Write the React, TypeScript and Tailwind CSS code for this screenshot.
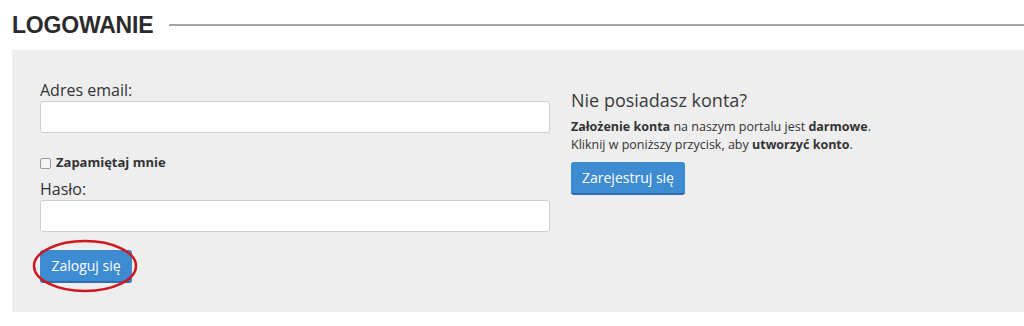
export default function App() {
  return (
    <div className="w-[1024px] h-[326px] bg-white font-['Open_Sans',sans-serif] text-[#333]">
      <div className="flex items-center pl-3 pt-[12px] h-[50px] pb-[12px]">
        <h1 className="font-['Liberation_Sans',Arial,sans-serif] font-bold text-[23px] leading-none text-[#2b2b2b] tracking-[-0.2px]">
          LOGOWANIE
        </h1>
        <div className="flex-1 ml-[16px] h-[2px] bg-[#a3a3a3]" />
      </div>
      <div className="ml-3 h-[262px] bg-[#eeeeee] flex pt-[29px]">
        <div className="w-[510px] ml-[28px]">
          <label className="block text-[16px] leading-[22px]">Adres email:</label>
          <input className="block w-[510px] h-[32px] bg-white border border-[#cfcfcf] rounded-[3px]" />
          <div className="flex items-center mt-[22px] h-[16px]">
            <span className="w-[11px] h-[11px] border border-[#9a9a9a] rounded-[2px] bg-[#f4f4f4]" />
            <span className="ml-[5px] text-[13px] font-bold text-[#333]">Zapamiętaj mnie</span>
          </div>
          <label className="block text-[16px] leading-[22px] mt-[7px]">Hasło:</label>
          <input type="password" className="block w-[510px] h-[32px] bg-white border border-[#cfcfcf] rounded-[3px]" />
          <div className="relative mt-[18px] w-[92px]">
            <button className="w-[92px] h-[33px] bg-[#3d8bd1] border-b-2 border-[#2f6fae] rounded-[3px] text-white text-[14px]">
              Zaloguj się
            </button>
            <svg className="absolute left-[-8px] top-[-11px]" width="108" height="54" viewBox="0 0 108 54">
              <ellipse cx="53" cy="27" rx="51" ry="25" fill="none" stroke="#d0161e" strokeWidth="2.5" />
            </svg>
          </div>
        </div>
        <div className="ml-[21px] pt-[9px]">
          <h2 className="text-[18px] leading-[24px] text-[#3a3a3a]">Nie posiadasz konta?</h2>
          <p className="mt-[6px] text-[12.5px] leading-[17.5px] text-[#333]">
            <b>Założenie konta</b> na naszym portalu jest <b>darmowe</b>.
            <br />
            Kliknij w poniższy przycisk, aby <b>utworzyć konto</b>.
          </p>
          <button className="mt-[9px] w-[114px] h-[33px] bg-[#3d8bd1] border-b-2 border-[#2f6fae] rounded-[3px] text-white text-[14px]">
            Zarejestruj się
          </button>
        </div>
      </div>
    </div>
  );
}
